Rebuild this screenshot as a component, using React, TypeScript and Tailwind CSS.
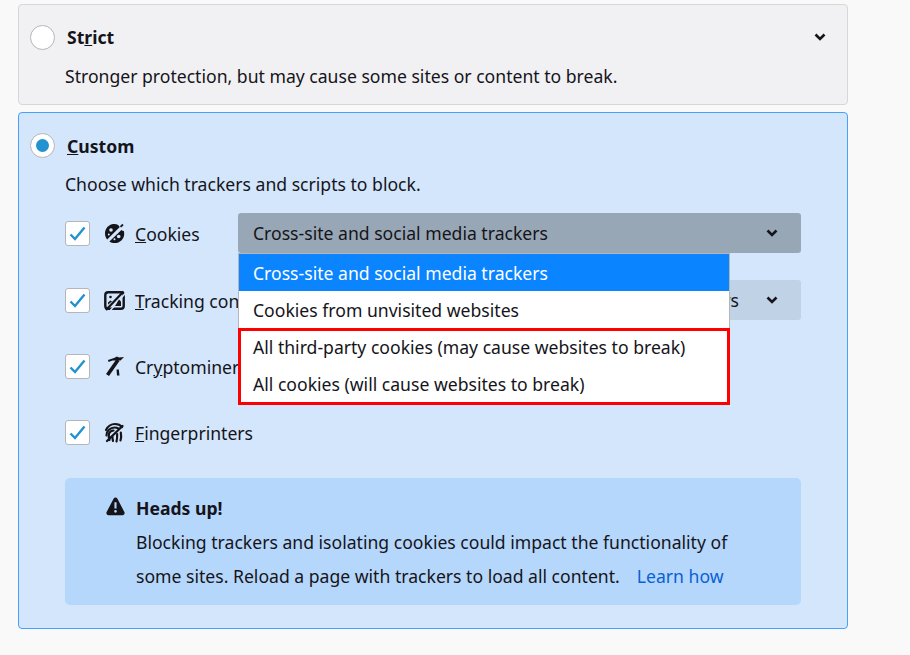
const font = { fontFamily: '"Noto Sans", "Open Sans", sans-serif' };

function Chevron() {
  return (
    <svg width="12" height="8" viewBox="0 0 12 8" fill="none">
      <path d="M1.500 1.500 6 6l4.500-4.500" stroke="#15141a" strokeWidth="2.600" />
    </svg>
  );
}

function Check() {
  return (
    <div className="w-[25px] h-[25px] shrink-0 bg-white rounded-[3px] border border-[#b5b5bb] flex items-center justify-center">
      <svg width="17" height="15" viewBox="0 0 17 15" fill="none">
        <path d="M1.500 8.500 6 13 15.500 1.500" stroke="#2292d0" strokeWidth="2.400" />
      </svg>
    </div>
  );
}

function CookieIcon() {
  return (
    <svg width="21" height="21" viewBox="0 0 21 21" fill="#15141a">
      <path d="M9.500 1C4.500 1.500 1 5.500 1 10.500c0 2.300.8 4.400 2.200 6L15.800 3.900c-.7-.5-1.300-1.100-1.600-1.900C12.800 1.200 11.200.8 9.500 1Z" />
      <path d="M19.800 8c.3 1 .4 1.900.4 2.900 0 5.100-4.300 9.100-9.500 9.100-2 0-3.800-.5-5.300-1.500L17.400 7c.7.700 1.500 1 2.400 1Z" />
      <path d="M16.500 3.800 19 1.500" stroke="#15141a" strokeWidth="1.800" />
      <circle cx="7" cy="7" r="1.800" fill="#d3e6fc" />
      <circle cx="4.800" cy="11.500" r="1" fill="#d3e6fc" />
      <circle cx="14.700" cy="13.500" r="1.800" fill="#d3e6fc" />
      <circle cx="10.500" cy="16.300" r="1" fill="#d3e6fc" />
    </svg>
  );
}

function TrackingIcon() {
  return (
    <svg width="21" height="21" viewBox="0 0 21 21" fill="none" stroke="#15141a">
      <rect x="1.300" y="2.300" width="18.400" height="16.400" rx="2.800" strokeWidth="2.400" />
      <path d="M3.500 21 21 1" stroke="#d3e6fc" strokeWidth="1.500" transform="translate(1.500 1)" />
      <path d="M2 20 19.500 1.500" strokeWidth="2.200" />
      <circle cx="6.500" cy="7" r="1.300" fill="#15141a" stroke="none" />
      <path d="M4 14.500v-2l2.500-2 1.500 1Z" fill="#15141a" stroke="none" />
      <path d="M11 16h6v-4.500L15 9.500Z" fill="#15141a" stroke="none" />
    </svg>
  );
}

function MinerIcon() {
  return (
    <svg width="20" height="22" viewBox="0 0 20 22" fill="#15141a">
      <path d="M3 5 9 3l3-1.500 2 1 5-.5-3.500 3.500H7.500L3.500 7Z" />
      <path d="M2.500 20 13 5" stroke="#15141a" strokeWidth="3.600" fill="none" />
      <path d="M11.500 14.500h2.300l.7 6h-2.500Z" />
    </svg>
  );
}

function FingerprintIcon() {
  return (
    <svg width="21" height="21" viewBox="0 0 21 21" fill="none" stroke="#15141a" strokeWidth="2.200" strokeLinecap="round">
      <path d="M2 8C4 4 7.500 2 11 2c3 0 5.500 1 7 3" />
      <path d="M2.500 13.500C2.300 9 6.500 5.500 10.500 5.500c1.500 0 3 .5 4 1" />
      <path d="M5.500 18c-.8-2.500-1-4.500-.5-6.500.8-1.800 2.300-2.800 4.500-3" />
      <path d="M3 19 18.500 4" strokeWidth="2.300" />
      <path d="M9 19c-.4-1.500-.6-2.800-.5-4" />
      <path d="M12.500 19.500c.6-2.500.9-5 .6-7.500" />
      <path d="M16.500 18.500c.7-2.500.9-5 .3-8" />
    </svg>
  );
}

function WarningIcon() {
  return (
    <svg width="19" height="19" viewBox="0 0 18 18" fill="#15141a">
      <path fillRule="evenodd" d="M9 .5c-.7 0-1.300.4-1.700 1L.6 14.200c-.7 1.400.2 3 1.800 3h13.200c1.600 0 2.500-1.600 1.800-3L10.700 1.500C10.300.9 9.700.5 9 .5ZM8 5h2v6H8ZM9 12.300a1.300 1.300 0 1 1 0 2.600 1.300 1.300 0 0 1 0-2.600Z" />
    </svg>
  );
}

const rows = [
  { pre: '', key: 'C', rest: 'ookies', icon: <CookieIcon />, gap: 'mb-[27px]' },
  { pre: '', key: 'T', rest: 'racking content', icon: <TrackingIcon />, gap: 'mb-[26px]' },
  { pre: 'Cr', key: 'y', rest: 'ptominers', icon: <MinerIcon />, gap: 'mb-[26px]' },
  { pre: '', key: 'F', rest: 'ingerprinters', icon: <FingerprintIcon />, gap: '' },
];

export default function App() {
  return (
    <div className="w-[910px] h-[655px] overflow-hidden bg-[#f9f9fa] text-[#15141a] text-[17.6px] leading-[27px]" style={font}>
      <div className="w-[830px] ml-[18px] pt-1">
        {/* Strict */}
        <div className="h-[101px] bg-[#f1f1f4] border border-[#d7d7db] rounded-[4px] pl-[11px] pr-[21px]">
          <div className="flex items-center h-[25px] mt-5">
            <div className="w-[25px] h-[25px] rounded-full bg-white border border-[#b5b5bb]" />
            <span className="ml-[12px] font-bold">
              St<span className="underline">r</span>ict
            </span>
            <span className="ml-auto -mt-[2px]">
              <Chevron />
            </span>
          </div>
          <p className="ml-[35px] mt-[13px]">Stronger protection, but may cause some sites or content to break.</p>
        </div>

        {/* Custom */}
        <div className="relative mt-[7px] h-[517px] bg-[#d3e6fc] border border-[#45a1ff] rounded-[4px] pl-[11px]">
          <div className="flex items-center h-[25px] mt-5">
            <div className="w-[25px] h-[25px] rounded-full bg-white border border-[#b5b5bb] flex items-center justify-center">
              <div className="w-[13px] h-[13px] rounded-full bg-[#2292d0]" />
            </div>
            <span className="ml-[12px] pt-[2px] font-bold">
              <span className="underline">C</span>ustom
            </span>
          </div>
          <p className="ml-[35px] mt-[13px]">Choose which trackers and scripts to block.</p>

          <div className="ml-[35px] mt-[15px] w-[736px] flex flex-col">
            {rows.map((row, i) => (
              <div key={row.rest} className={`relative flex items-center h-10 ${row.gap}`}>
                <Check />
                <span className="ml-[14px] w-[21px] flex justify-center">{row.icon}</span>
                <span className="ml-[10px] pt-[2px] w-[103px] whitespace-nowrap">
                  {row.pre}
                  <span className="underline">{row.key}</span>
                  {row.rest}
                </span>
                {i === 0 && (
                  <div className="relative flex-1 h-10 rounded-[3px] bg-[#98a7b5] flex items-center justify-between pl-[15px] pr-[23px]">
                    <span className="pt-[1px]">Cross-site and social media trackers</span>
                    <Chevron />
                  </div>
                )}
                {i === 1 && (
                  <div className="relative flex-1 h-10 rounded-[3px] bg-[#c0d2e6] flex items-center justify-end pr-[23px]">
                    <span className="pt-[1px]">In all windows</span>
                    <span className="ml-[27px]">
                      <Chevron />
                    </span>
                  </div>
                )}
              </div>
            ))}
          </div>

          {/* Heads up */}
          <div className="ml-[35px] mt-[26px] w-[736px] h-[127px] bg-[#b5d7fb] rounded-[5px] pt-[13px] pl-[41px] flex leading-[34px]">
            <div className="pt-[6px] w-[30px] shrink-0">
              <WarningIcon />
            </div>
            <div>
              <p className="font-bold">Heads up!</p>
              <p>Blocking trackers and isolating cookies could impact the functionality of</p>
              <p>
                some sites. Reload a page with trackers to load all content.
                <span className="ml-[17px] text-[#0a60d6]">Learn how</span>
              </p>
            </div>
          </div>

          {/* Dropdown list */}
          <div className="absolute left-[219px] top-[140px] w-[492px] bg-white border-x border-t border-[#b5b5bb]">
            <div className="h-[37px] pl-[14px] pt-[1px] flex items-center bg-[#0a84ff] text-white">Cross-site and social media trackers</div>
            <div className="h-[37px] pl-[14px] pt-[1px] flex items-center">Cookies from unvisited websites</div>
            <div className="-mx-px h-[77px] border-[3px] border-[#ff0000] pl-3 pb-[2px] flex flex-col justify-center gap-[15px] leading-[22px]">
              <div>All third-party cookies (may cause websites to break)</div>
              <div>All cookies (will cause websites to break)</div>
            </div>
          </div>
        </div>
      </div>
    </div>
  );
}
